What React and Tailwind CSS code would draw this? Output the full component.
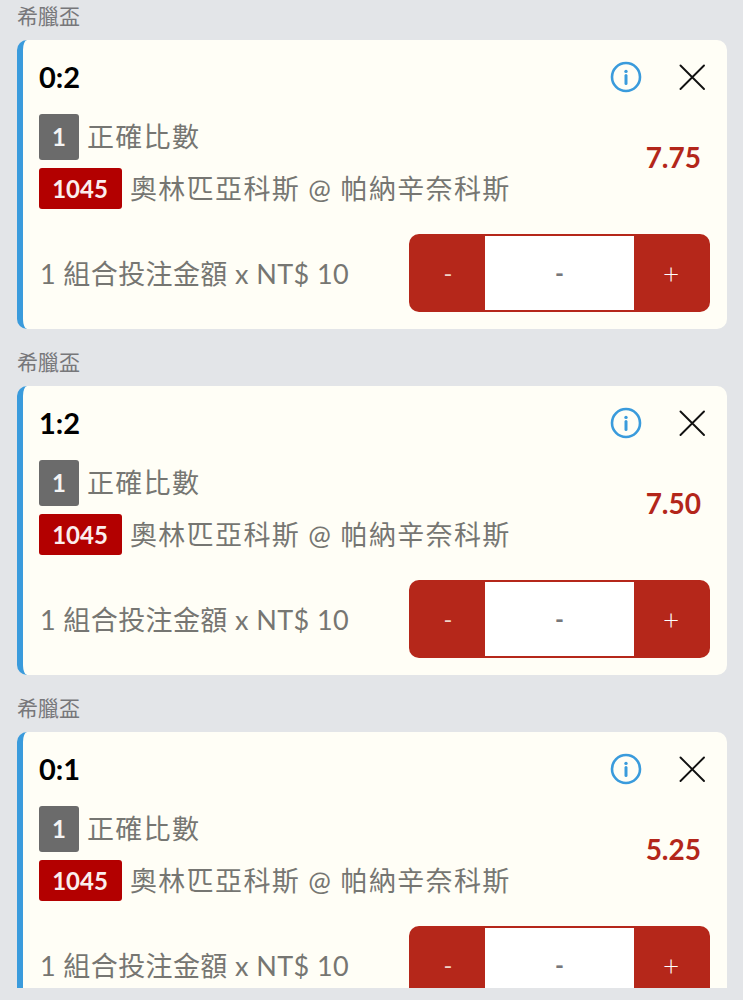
import React from "react";

const bets = [
  { score: "0:2", odds: "7.75" },
  { score: "1:2", odds: "7.50" },
  { score: "0:1", odds: "5.25" },
];

const fontStack = "font-['Lato','Noto_Sans_CJK_TC',sans-serif]";

const InfoIcon = () => (
  <svg width="32" height="32" viewBox="0 0 32 32" fill="none">
    <circle cx="16" cy="16" r="14" stroke="#3a9bdc" strokeWidth="2.6" />
    <circle cx="16" cy="10.4" r="1.7" fill="#3a9bdc" />
    <path d="M16 14.5V22.5" stroke="#3a9bdc" strokeWidth="3" strokeLinecap="round" />
  </svg>
);

const CloseIcon = () => (
  <svg width="26" height="26" viewBox="0 0 26 26" fill="none">
    <path d="M1.5 1.5L25 25M25 1.5L1.5 25" stroke="#111111" strokeWidth="1.9" strokeLinecap="round" />
  </svg>
);

const BetCard = ({ score, odds }) => (
  <div className="mb-[17px]">
    <div className="h-[40px] pl-[17px] pb-[10px] flex items-center text-[21px] leading-none text-[#77777a]">
      希臘盃
    </div>
    <div className="ml-[17px] mr-[16px] h-[289px] bg-[#fffef6] border-l-[6px] border-[#3a9bdc] rounded-[10px] pl-[16px] pr-[17px] pt-[17px]">
      <div className="h-[40px] flex items-center justify-between">
        <span className="text-[29px] font-bold text-black leading-none pb-[2px]">{score}</span>
        <div className="flex items-center gap-[37px] pr-[5px]">
          <InfoIcon />
          <CloseIcon />
        </div>
      </div>

      <div className="mt-[17px] flex items-center justify-between">
        <div>
          <div className="flex items-center gap-[8px]">
            <span className="w-[40px] h-[46px] rounded-[3px] bg-[#6b6b6b] text-[#f4f4f4] text-[24px] font-bold flex items-center justify-center">
              1
            </span>
            <span className="text-[27px] tracking-[1.3px] text-[#767672] leading-none pb-[2px]">
              正確比數
            </span>
          </div>
          <div className="mt-[8px] flex items-center gap-[8px]">
            <span className="w-[83px] h-[41px] rounded-[3px] bg-[#b30000] text-[#fbeeee] text-[24px] font-bold flex items-center justify-center pr-[1px]">
              1045
            </span>
            <span className="text-[27px] tracking-[1.35px] text-[#767672] leading-none">
              奧林匹亞科斯 @ 帕納辛奈科斯
            </span>
          </div>
        </div>
        <span className="pr-[9px] pb-[10px] text-[28px] font-bold text-[#b3261a] leading-none">{odds}</span>
      </div>

      <div className="mt-[25px] flex items-center justify-between">
        <span className="pl-[1px] text-[27px] tracking-[0.4px] text-[#767672] leading-none">1 組合投注金額 x NT$ 10</span>
        <div className="w-[301px] h-[78px] rounded-[10px] bg-[#b5271a] flex items-center">
          <span className="w-[76px] pl-[2px] text-center text-[24px] text-[#f0d5c8] leading-none">-</span>
          <span className="w-[149px] h-[74px] bg-white flex items-center justify-center text-[24px] font-bold text-[#77777a] leading-none">
            -
          </span>
          <span className="w-[76px] pr-[2px] text-center text-[28px] font-light text-white leading-none">+</span>
        </div>
      </div>
    </div>
  </div>
);

export default function App() {
  return (
    <div className={`h-[1000px] bg-[#e3e5e8] ${fontStack}`}>
      <div className="h-[988px] overflow-hidden">
        {bets.map((bet, i) => (
          <BetCard key={i} score={bet.score} odds={bet.odds} />
        ))}
      </div>
    </div>
  );
}
